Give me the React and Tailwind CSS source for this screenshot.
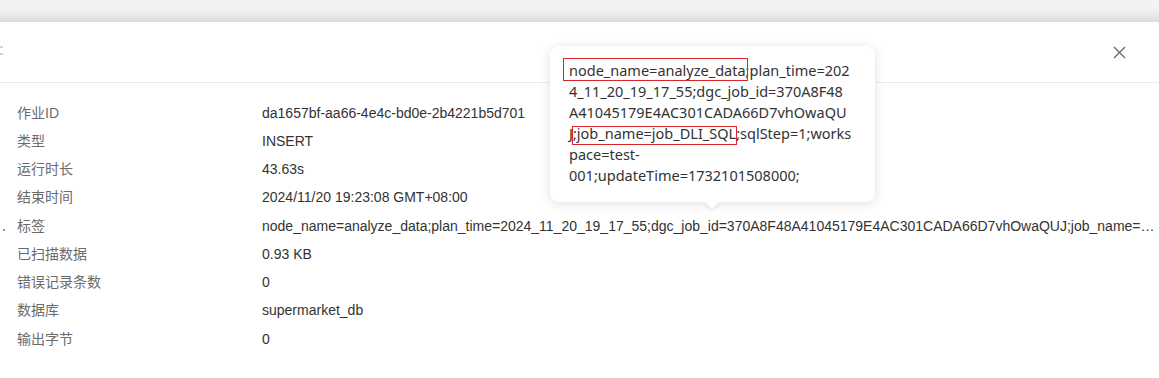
import React from 'react';

const rows = [
  { label: '作业ID', value: 'da1657bf-aa66-4e4c-bd0e-2b4221b5d701' },
  { label: '类型', value: 'INSERT' },
  { label: '运行时长', value: '43.63s' },
  { label: '结束时间', value: '2024/11/20 19:23:08 GMT+08:00' },
  {
    label: '标签',
    value:
      'node_name=analyze_data;plan_time=2024_11_20_19_17_55;dgc_job_id=370A8F48A41045179E4AC301CADA66D7vhOwaQUJ;job_name=job_DLI_SQL;sqlStep=1;workspace=test-001;updateTime=1732101508000;',
    dot: true,
  },
  { label: '已扫描数据', value: '0.93 KB' },
  { label: '错误记录条数', value: '0' },
  { label: '数据库', value: 'supermarket_db' },
  { label: '输出字节', value: '0' },
];

function Tooltip() {
  return (
    <div className="absolute left-[550px] top-[46px] w-[325px] h-[156px] bg-white rounded-[9px] shadow-[0_2px_12px_rgba(0,0,0,0.12)] pl-[19px] pt-[14px] text-[14.5px] leading-[21px] text-[#333] font-['Noto_Sans',sans-serif]">
      <div>
        <span className="relative">
          node_name=analyze_data
          <span className="absolute -left-[6px] -right-[2px] -top-[2px] -bottom-[1px] border border-[#d9262c]" />
        </span>
        ;plan_time=202
      </div>
      <div>4_11_20_19_17_55;dgc_job_id=370A8F48</div>
      <div>A41045179E4AC301CADA66D7vhOwaQU</div>
      <div>
        J
        <span className="relative">
          ;job_name=job_DLI_SQL
          <span className="absolute -left-[1px] -right-[1px] top-[3px] -bottom-[2px] border border-[#d9262c]" />
        </span>
        ;sqlStep=1;works
      </div>
      <div>pace=test-</div>
      <div>001;updateTime=1732101508000;</div>
      <div className="absolute left-[157px] -bottom-[5px] w-[10px] h-[10px] bg-white rotate-45 shadow-[2px_2px_3px_rgba(0,0,0,0.06)]" />
    </div>
  );
}

export default function App() {
  return (
    <div className="relative w-[1159px] h-[378px] bg-white overflow-hidden font-['Liberation_Sans','Noto_Sans_CJK_SC',sans-serif]">
      <div className="h-[22px] bg-gradient-to-b from-[#f4f4f4] via-[#f1f1f1] to-[#dbdbdb]" />

      <div className="h-[61px] flex items-center justify-between border-b border-[#ececec]">
        <div className="flex flex-col gap-[5px] -mt-[4px]">
          <div className="w-[3px] h-[2px] bg-[#d4d4d4]" />
          <div className="w-[3px] h-[2px] bg-[#d4d4d4]" />
        </div>
        <button className="mr-[33px] w-[14px] h-[14px] flex items-center justify-center">
          <svg width="13" height="13" viewBox="0 0 13 13" fill="none" stroke="#6b6b6b" strokeWidth="1.4">
            <path d="M1 1L12 12M12 1L1 12" />
          </svg>
        </button>
      </div>

      <div className="pt-[16px] pl-[17px] pr-[4px] text-[14px]">
        {rows.map((r) => (
          <div key={r.label} className="relative flex items-center h-[28.25px]">
            {r.dot && <span className="absolute -left-[14px] top-[17px] w-[1.5px] h-[1.5px] bg-[#999]" />}
            <div className="w-[245px] shrink-0 text-[#6b6b6b]">{r.label}</div>
            <div className="min-w-0 flex-1 truncate text-[#333]">{r.value}</div>
          </div>
        ))}
      </div>

      <Tooltip />
    </div>
  );
}
